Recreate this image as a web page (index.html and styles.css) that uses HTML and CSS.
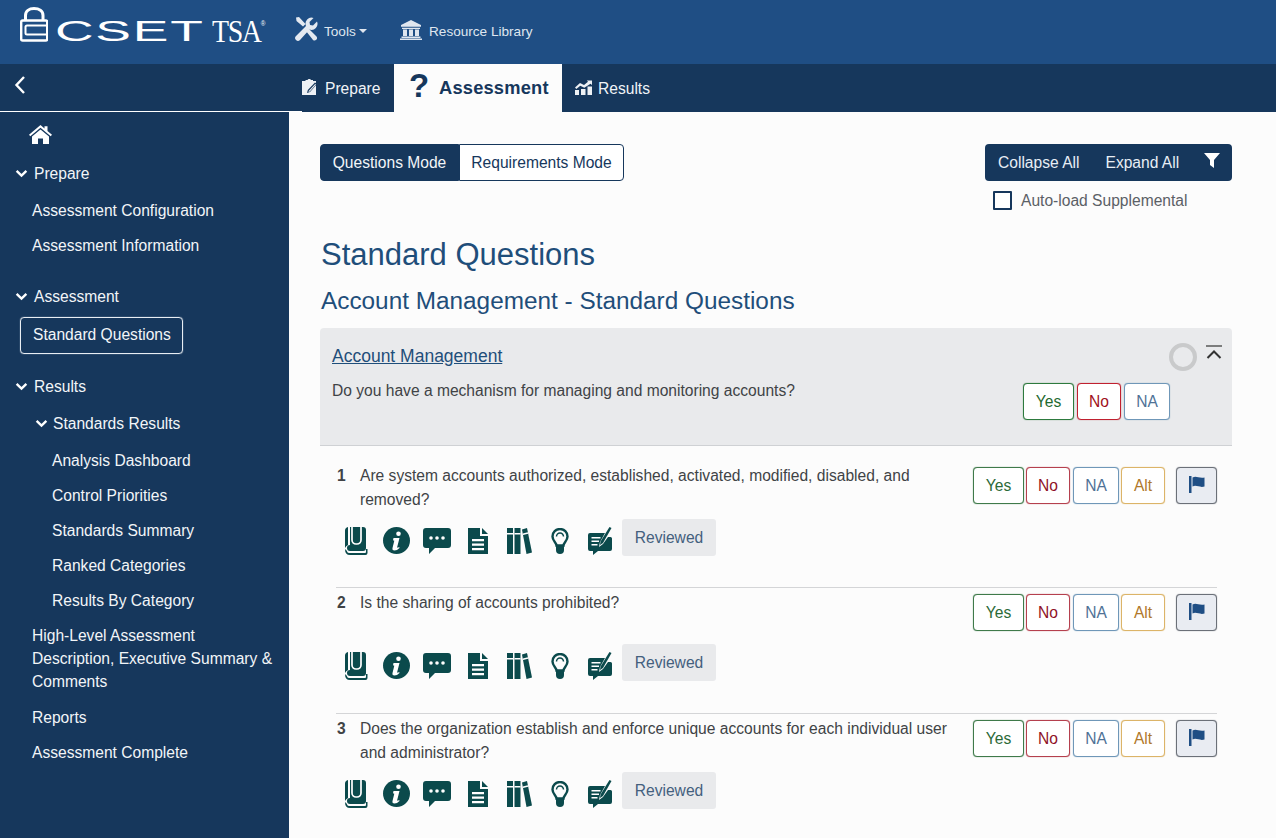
FILE: index.html
```html
<!DOCTYPE html>
<html lang="en">
<head>
<meta charset="utf-8">
<title>CSET TSA</title>
<link rel="stylesheet" href="styles.css">
</head>
<body>
<svg class="sprites" aria-hidden="true">
  <symbol id="i-book" viewBox="0 0 23 28"><path d="M4 0h14a3 3 0 0 1 3 3v18a3 3 0 0 1-3 3H5a3 3 0 0 1 0-6V0z M0 4a4 4 0 0 1 3-4v18a6 6 0 0 0-3 3z"/><path class="ws" d="M7 0v13a4 4 0 0 0 4 4h1a4 4 0 0 0 4-4V0"/><path d="M2 24q0 2 3 2h15a1 1 0 0 0 1-1v-3h1.500v4a2 2 0 0 1-2 2H5q-5 0-5-6z"/></symbol>
  <symbol id="i-info" viewBox="0 0 27 27"><circle cx="13.500" cy="13.500" r="13.500"/><circle class="w" cx="15.500" cy="6.800" r="2.300"/><path class="w" d="M10.500 11h6l-2.300 9q-.2.800.5.800l1.500-.8.300 1q-2.500 2.500-5 2.500-2.500 0-2-2.500l1.800-7.300-1.300-.5z"/></symbol>
  <symbol id="i-chat" viewBox="0 0 28 26"><path d="M3 0h22a3 3 0 0 1 3 3v14a3 3 0 0 1-3 3H12l-6 6v-6H3a3 3 0 0 1-3-3V3a3 3 0 0 1 3-3z"/><circle class="w" cx="8" cy="10" r="1.800"/><circle class="w" cx="14" cy="10" r="1.800"/><circle class="w" cx="20" cy="10" r="1.800"/></symbol>
  <symbol id="i-doc" viewBox="0 0 20 26"><path d="M0 0h12v8h8v18H0z"/><path d="M14 0l6 6h-6z"/><path class="w" d="M4 11h12v2.300H4zM4 15.500h12v2.300H4zM4 20h12v2.300H4z"/></symbol>
  <symbol id="i-books" viewBox="0 0 25 26"><path d="M0 0h6v26H0zM7.500 0h6v26h-6z"/><path d="M15 1.500l5-1.500 5 24.500-5.500 1.500z"/><path class="w" d="M0 5h6v1.500H0zM7.500 5h6v1.500h-6zM15.800 5.500l5-1.300.3 1.500-5 1.300z"/></symbol>
  <symbol id="i-bulb" viewBox="0 0 18 26"><path class="o" d="M5.500 17.500c0-3-4-4.500-4-9a7.500 7.500 0 0 1 15 0c0 4.500-4 6-4 9z"/><path class="o thin" d="M5.500 8.500a3.500 3.500 0 0 1 7 0"/><path d="M5 18h8v4a4 4 0 0 1-8 0z"/></symbol>
  <symbol id="i-note" viewBox="0 0 24 28"><path d="M2 6h15l-5 9-1 5 4-3 5-7h2.500a1.500 1.500 0 0 1 1.500 1.500V22a2 2 0 0 1-2 2H10l-5 4v-4H2a2 2 0 0 1-2-2V8a2 2 0 0 1 2-2z"/><path class="w" d="M3.500 10h9v1.400h-9zM3.500 13.500h7.500v1.400H3.500zM3.500 17h6v1.400h-6z"/><path d="M21.500 0l2 1L15 16l-3 2 .5-3.500z"/></symbol>
  <symbol id="i-flag" viewBox="0 0 16 17"><path d="M0 0h2.500v17H0z"/><path d="M3.500 1.500c4-2 6 1 12 0v9c-5 1.500-8-2-12 0z"/></symbol>
  <symbol id="i-chev" viewBox="0 0 12 8"><path d="M1.500 1.500L6 6l4.500-4.500" fill="none" stroke="currentColor" stroke-width="2.200"/></symbol>
</svg>

<header class="topbar">
  <div class="logo">
    <svg class="lock" viewBox="0 0 28 35" aria-hidden="true"><path d="M5.500 13V8.500C5.500 4 9 1.500 14 1.500S23 4 23 8.500V13" fill="none" stroke="#fff" stroke-width="3"/><rect x="1.200" y="13.500" width="26" height="20" rx="1.500" fill="none" stroke="#fff" stroke-width="2.400"/><path d="M27 18.500H7a1.500 1.500 0 0 0-1.500 1.500v6A1.500 1.500 0 0 0 7 27.500h20" fill="none" stroke="#fff" stroke-width="2"/></svg>
    <span class="cset">CSET</span>
    <span class="tsa">TSA<sup>®</sup></span>
  </div>
  <nav class="topnav">
    <a class="topnav-item tools">
      <svg class="ico-tools" viewBox="0 0 24 24" aria-hidden="true"><path d="M2 0.500L5 0l6.500 7 -2.500 2.500L2.500 4z M12 14l2.500-2.500 8 8a2.500 2.500 0 0 1-3.500 3.500z"/><path d="M23 4.500L19 8.500 16 8l-.5-3L19.500 1A6 6 0 0 0 12 9L2 19a2.800 2.800 0 0 0 4 4L15.500 12.500A6 6 0 0 0 23 4.500z"/></svg>
      <span>Tools</span><i class="caret"></i>
    </a>
    <a class="topnav-item lib">
      <svg class="ico-bank" viewBox="0 0 22 20" aria-hidden="true"><path d="M11 0l10 5v1.800H1V5zM2 7.800h18v1.200H2zM3 9.500h4v6.500H3zM9 9.500h4v6.500H9zM15 9.500h4v6.500h-4zM1.500 16.500h19v1.500h-19zM0 18.400h22V20H0z"/></svg>
      <span>Resource Library</span>
    </a>
  </nav>
</header>

<div class="tabbar">
  <div class="tabbar-left">
    <svg class="back" viewBox="0 0 12 20" aria-hidden="true"><path d="M10 2L2.500 10 10 18" fill="none" stroke="#fff" stroke-width="2.400"/></svg>
  </div>
  <a class="tab">
    <svg class="ico-prep" viewBox="0 0 16 16" aria-hidden="true"><path class="lt" d="M0 2h3.500V1h2a2 2 0 0 1 3.500 0h2v1h3v14H0z"/><path d="M13 3.500l2 1.500-7 8-3 1 .8-3z" fill="#16375c"/><path class="lt" d="M13.200 5l.8.600-6.200 7-1.300.4.400-1.300z"/></svg>
    Prepare
  </a>
  <a class="tab tab-active"><span class="qmark">?</span><span class="tab-title">Assessment</span></a>
  <a class="tab tab-results">
    <svg class="ico-res" viewBox="0 0 17 15" aria-hidden="true"><path d="M0 10h4v5H0zM6 9h4.500v6H6zM12.500 6.500H17V15h-4.500z"/><path d="M0 7.500L5 3l4 2 4-3.300L11.800.5H17v4.500l-1.500-1.300L9.300 7.800l-4-2L1.300 9z"/></svg>
    Results
  </a>
</div>

<div class="layout">
  <aside class="sidebar">
    <div class="home">
      <svg class="ico-home" viewBox="0 0 23 19" aria-hidden="true"><path d="M11.500 0l4 3.400V1.200h3v4.800l4.500 3.800-1.300 1.500-10.200-8.500L1.300 11.300 0 9.800z"/><path d="M11.500 4.500L20 11.500V19h-6v-5.500H9V19H3v-7.500z"/></svg>
    </div>
    <div class="side-head"><svg class="chev"><use href="#i-chev"/></svg>Prepare</div>
    <a class="side-item">Assessment Configuration</a>
    <a class="side-item">Assessment Information</a>
    <div class="side-head side-head-a"><svg class="chev"><use href="#i-chev"/></svg>Assessment</div>
    <a class="side-current">Standard Questions</a>
    <div class="side-head side-head-r"><svg class="chev"><use href="#i-chev"/></svg>Results</div>
    <div class="side-head side-sub"><svg class="chev"><use href="#i-chev"/></svg>Standards Results</div>
    <a class="side-item side-deep">Analysis Dashboard</a>
    <a class="side-item side-deep">Control Priorities</a>
    <a class="side-item side-deep">Standards Summary</a>
    <a class="side-item side-deep">Ranked Categories</a>
    <a class="side-item side-deep">Results By Category</a>
    <a class="side-multi">High-Level Assessment Description, Executive Summary &amp; Comments</a>
    <a class="side-item">Reports</a>
    <a class="side-item">Assessment Complete</a>
  </aside>

  <main class="content">
    <div class="toolbar">
      <div class="modes">
        <button class="mode mode-on">Questions Mode</button><button class="mode">Requirements Mode</button>
      </div>
      <div class="toolbar-right">
        <div class="actions">
          <span class="act-collapse">Collapse All</span>
          <span class="act-expand">Expand All</span>
          <svg class="ico-filter" viewBox="0 0 16 15" aria-hidden="true"><path d="M0 0h16l-6 7v8L6 12V7z"/></svg>
        </div>
        <label class="autoload"><span class="check"></span>Auto-load Supplemental</label>
      </div>
    </div>

    <h1 class="title">Standard Questions</h1>
    <h2 class="subtitle">Account Management - Standard Questions</h2>

    <section class="panel">
      <div class="panel-top">
        <a class="panel-link">Account Management</a>
        <span class="ring"></span>
        <svg class="collapse" viewBox="0 0 16 15" aria-hidden="true"><path d="M0 1h16" stroke="#333" stroke-width="1.200" fill="none"/><path d="M1.500 13L8 6.500 14.500 13" stroke="#333" stroke-width="2" fill="none"/></svg>
      </div>
      <div class="panel-q">
        <p class="panel-text">Do you have a mechanism for managing and monitoring accounts?</p>
        <div class="answers panel-answers">
          <button class="ans yes strong">Yes</button>
          <button class="ans no strong">No</button>
          <button class="ans na">NA</button>
        </div>
      </div>
    </section>

    <div class="questions">
      <article class="q q-first">
        <div class="q-head q-head-52">
          <span class="q-num">1</span>
          <p class="q-text">Are system accounts authorized, established, activated, modified, disabled, and removed?</p>
          <div class="answers">
            <button class="ans yes">Yes</button><button class="ans no">No</button><button class="ans na">NA</button><button class="ans alt">Alt</button>
            <button class="flag"><svg><use href="#i-flag"/></svg></button>
          </div>
        </div>
        <div class="tools-row">
          <span class="cell"><svg class="t-book"><use href="#i-book"/></svg></span>
          <span class="cell"><svg class="t-info"><use href="#i-info"/></svg></span>
          <span class="cell"><svg class="t-chat"><use href="#i-chat"/></svg></span>
          <span class="cell"><svg class="t-doc"><use href="#i-doc"/></svg></span>
          <span class="cell"><svg class="t-books"><use href="#i-books"/></svg></span>
          <span class="cell"><svg class="t-bulb"><use href="#i-bulb"/></svg></span>
          <span class="cell"><svg class="t-note"><use href="#i-note"/></svg></span>
          <span class="reviewed">Reviewed</span>
        </div>
      </article>
      <article class="q">
        <div class="q-head q-head-50">
          <span class="q-num">2</span>
          <p class="q-text">Is the sharing of accounts prohibited?</p>
          <div class="answers">
            <button class="ans yes">Yes</button><button class="ans no">No</button><button class="ans na">NA</button><button class="ans alt">Alt</button>
            <button class="flag"><svg><use href="#i-flag"/></svg></button>
          </div>
        </div>
        <div class="tools-row">
          <span class="cell"><svg class="t-book"><use href="#i-book"/></svg></span>
          <span class="cell"><svg class="t-info"><use href="#i-info"/></svg></span>
          <span class="cell"><svg class="t-chat"><use href="#i-chat"/></svg></span>
          <span class="cell"><svg class="t-doc"><use href="#i-doc"/></svg></span>
          <span class="cell"><svg class="t-books"><use href="#i-books"/></svg></span>
          <span class="cell"><svg class="t-bulb"><use href="#i-bulb"/></svg></span>
          <span class="cell"><svg class="t-note"><use href="#i-note"/></svg></span>
          <span class="reviewed">Reviewed</span>
        </div>
      </article>
      <article class="q">
        <div class="q-head q-head-52">
          <span class="q-num">3</span>
          <p class="q-text">Does the organization establish and enforce unique accounts for each individual user and administrator?</p>
          <div class="answers">
            <button class="ans yes">Yes</button><button class="ans no">No</button><button class="ans na">NA</button><button class="ans alt">Alt</button>
            <button class="flag"><svg><use href="#i-flag"/></svg></button>
          </div>
        </div>
        <div class="tools-row">
          <span class="cell"><svg class="t-book"><use href="#i-book"/></svg></span>
          <span class="cell"><svg class="t-info"><use href="#i-info"/></svg></span>
          <span class="cell"><svg class="t-chat"><use href="#i-chat"/></svg></span>
          <span class="cell"><svg class="t-doc"><use href="#i-doc"/></svg></span>
          <span class="cell"><svg class="t-books"><use href="#i-books"/></svg></span>
          <span class="cell"><svg class="t-bulb"><use href="#i-bulb"/></svg></span>
          <span class="cell"><svg class="t-note"><use href="#i-note"/></svg></span>
          <span class="reviewed">Reviewed</span>
        </div>
      </article>
    </div>
  </main>
</div>
</body>
</html>
```
FILE: styles.css
```css
* { box-sizing: border-box; }
html, body { margin: 0; height: 100%; overflow: hidden; }
body {
  width: 1276px; height: 838px;
  font-family: "Liberation Sans", Arial, sans-serif;
  font-size: 15.600px; line-height: 24px;
  color: #404346; background: #fcfcfc;
  display: flex; flex-direction: column;
}
p, h1, h2 { margin: 0; font-weight: 400; }
button { font: inherit; cursor: pointer; }
.sprites { width: 0; height: 0; position: absolute; }
.w { fill: #fff; }
.ws { fill: none; stroke: #fff; stroke-width: 1.700; }

/* top bar */
.topbar { height: 64px; flex: none; background: #1f4e84; display: flex; align-items: flex-start; color: #dfe6ef; }
.logo { display: flex; align-items: flex-start; width: 294px; padding: 7px 0 0 20px; color: #fff; }
.lock { width: 28px; height: 35px; flex: none; }
.cset {
  display: block; width: 80px; margin: 9px 0 0 7px;
  font-size: 30px; line-height: 30px; letter-spacing: 1px; font-weight: 400;
  transform: scaleX(1.780); transform-origin: left center; white-space: nowrap;
}
.tsa {
  margin: 9px 0 0 77px; font-family: "Liberation Serif", serif;
  font-size: 31px; line-height: 32px; letter-spacing: -1.500px; white-space: nowrap;
  display: inline-block; transform: scaleX(.9); transform-origin: left center;
}
.tsa sup { font-size: 7px; line-height: 0; vertical-align: 16px; font-family: "Liberation Sans", sans-serif; letter-spacing: 0; }
.topnav { display: flex; align-items: center; height: 64px; font-size: 13.600px; }
.topnav-item { display: flex; align-items: center; }
.tools { width: 106px; }
.ico-tools { width: 24px; height: 24px; fill: #e4e9f0; margin: -6px 6px 0 0; }
.caret { width: 0; height: 0; margin: -3px 0 0 3px; border: 4px solid transparent; border-top-color: #dfe6ef; border-bottom: 0; }
.ico-bank { width: 22px; height: 20px; fill: #dfe6ef; margin: -4px 7px 0 0; }

/* tab bar */
.tabbar { height: 48px; flex: none; background: #16375c; display: flex; color: #f0f3f7; }
.tabbar-left { width: 302px; padding: 11px 0 0 14px; border-bottom: 1px solid #fff; flex: none; margin-right: -13px; }
.back { width: 12px; height: 20px; display: block; }
.tab { display: flex; align-items: center; white-space: nowrap; padding-top: 2px; }
.tabbar .tab:nth-child(2) { width: 105px; padding-left: 13px; }
.ico-prep { width: 16px; height: 16px; margin: -4px 7px 0 0; }
.lt { fill: #eef1f5; }
.tab-active { width: 168px; background: #fcfcfc; color: #16375c; padding: 0 0 0 15px; }
.qmark { font-size: 33px; font-weight: 700; line-height: 44px; width: 30px; margin-top: -4px; }
.tab-title { font-size: 18.300px; font-weight: 700; letter-spacing: .2px; margin-top: -1px; }
.tab-results { padding-left: 13px; }
.ico-res { width: 17px; height: 15px; fill: #eef1f5; margin: -4px 6px 0 0; }

/* layout */
.layout { flex: 1; display: flex; min-height: 0; }

/* sidebar */
.sidebar { width: 289px; flex: none; background: #16375c; color: #f2f5f8; display: flex; flex-direction: column; align-items: flex-start; }
.home { height: 44px; padding: 13px 0 0 29px; }
.ico-home { display: block; width: 23px; height: 19px; fill: #fff; }
.side-head { height: 35px; margin-bottom: 2px; display: flex; align-items: center; padding-left: 15px; }
.side-head-a { margin-top: 16px; margin-bottom: 0; }
.side-head-r { margin-top: 15px; }
.side-sub { padding-left: 35px; }
.chev { width: 13px; height: 9px; margin-right: 6px; color: #fff; }
.side-sub .chev { margin-right: 5px; }
.side-item { display: block; height: 35px; line-height: 35px; padding-left: 32px; }
.side-deep { padding-left: 52px; }
.side-current { display: block; margin: 3px 0 0 20px; width: 163px; height: 37px; line-height: 34px; padding-left: 12px; border: 1px solid #e8edf3; border-radius: 4px; box-shadow: 0 0 1px #e8edf3; }
.side-multi { display: block; width: 100%; padding: 6px 10px 7px 32px; line-height: 23px; }

/* content */
.content { flex: 1; min-width: 0; padding: 32px 44px 0 31px; }
.toolbar { display: flex; justify-content: space-between; align-items: flex-start; height: 66px; }
.modes { display: flex; }
.mode { height: 37px; border: 1px solid #16375c; background: #fff; color: #16375c; padding: 0; width: 165px; border-radius: 0 4px 4px 0; }
.mode-on { width: 139px; background: #16375c; color: #f2f5f8; border-radius: 4px 0 0 4px; }
.toolbar-right { width: 247px; }
.actions { height: 37px; background: #16375c; color: #e8eef5; border-radius: 4px; display: flex; align-items: center; padding-left: 13px; }
.act-expand { margin-left: 26px; }
.ico-filter { width: 16px; height: 15px; fill: #fff; margin: -5px 0 0 25px; }
.autoload { display: flex; align-items: center; height: 19px; margin: 10px 0 0 8px; color: #5b6066; }
.check { width: 19px; height: 19px; border: 2px solid #16375c; background: #fff; margin-right: 9px; border-radius: 1px; }

.title { font-size: 31px; line-height: 36px; color: #1f4e7a; margin: 27px 0 0 1px; }
.subtitle { font-size: 24.350px; line-height: 29px; color: #1f4e7a; margin: 13px 0 0 1px; }

/* panel */
.panel { margin-top: 13px; background: #e9eaec; border-bottom: 1px solid #cfd1d4; border-radius: 4px 4px 0 0; padding: 13px 10px 25px 12px; height: 118px; }
.panel-top { display: flex; align-items: center; height: 30px; }
.panel-link { font-size: 17.500px; color: #1f4e7a; text-decoration: underline; flex: 1; }
.ring { width: 28px; height: 28px; border: 4px solid #c9cacb; border-radius: 50%; margin-top: 1px; }
.collapse { width: 16px; height: 15px; margin: -8px 0 0 9px; }
.panel-q { display: flex; margin-top: 12px; }
.panel-text { flex: 1; margin-top: -4px; }
.panel-answers { margin-right: 52px; }

.answers { display: flex; flex: none; }
.ans { height: 37px; width: 46px; padding: 0; background: #fff; border: 1px solid #888; border-radius: 4px; margin-right: 2px; }
.yes { width: 51px; border-color: #3f7a4a; color: #2b6a38; box-shadow: 0 0 1px #3f7a4a; }
.no { width: 44px; border-color: #b5404e; color: #8f1226; box-shadow: 0 0 1px #b5404e; margin-right: 3px; }
.na { width: 46px; border-color: #6f97b8; color: #4f7296; box-shadow: 0 0 1px #6f97b8; }
.alt { width: 44px; border-color: #dcb468; color: #b0782a; box-shadow: 0 0 1px #dcb468; margin-right: 0; }
.strong.yes { border-color: #2d7a3e; color: #1f6a30; }
.strong.no { border-color: #c0202f; color: #a01020; }
.panel-answers .ans { margin-right: 3px; }
.panel-answers .na { margin-right: 0; }
.flag { width: 41px; height: 37px; margin-left: 11px; padding: 0; background: #e9ecf2; border: 1px solid #6b7078; box-shadow: 0 0 1px #6b7078; border-radius: 4px; display: flex; align-items: flex-start; justify-content: center; }
.flag svg { width: 16px; height: 17px; fill: #1f4e84; margin-top: 8px; }

/* questions */
.questions { padding: 0 15px 0 16px; }
.q { padding: 6px 0 32px; border-bottom: 1px solid #d4d5d7; }
.q-first { padding-top: 21px; padding-bottom: 31px; }
.q-head { display: flex; align-items: flex-start; }
.q-head-52 { height: 52px; }
.q-head-50 { height: 50px; }
.q-num { width: 24px; flex: none; padding-left: 1px; font-weight: 700; margin-top: -3px; }
.q-text { flex: 1; margin: -3px 13px 0 0; }
.tools-row { display: flex; align-items: center; height: 37px; }
.cell { width: 40.500px; display: flex; justify-content: center; align-items: center; margin-top: 6px; flex: none; }
.cell svg { fill: #0b4a4c; display: block; }
.t-book { width: 23px; height: 28px; }
.t-info { width: 27px; height: 27px; }
.t-chat { width: 28px; height: 26px; }
.t-doc { width: 20px; height: 26px; }
.t-books { width: 25px; height: 26px; margin-left: 3px; }
.t-bulb { width: 18px; height: 26px; margin-left: 3px; }
.t-note { width: 24px; height: 28px; margin-left: 2px; }
.o { fill: none; stroke: #0b4a4c; stroke-width: 2.400; }
.thin { stroke-width: 1.500; }
.reviewed { margin-left: 2.500px; width: 94px; height: 37px; line-height: 37px; text-align: center; background: #e9eaec; color: #44607e; border-radius: 3px; }
```
